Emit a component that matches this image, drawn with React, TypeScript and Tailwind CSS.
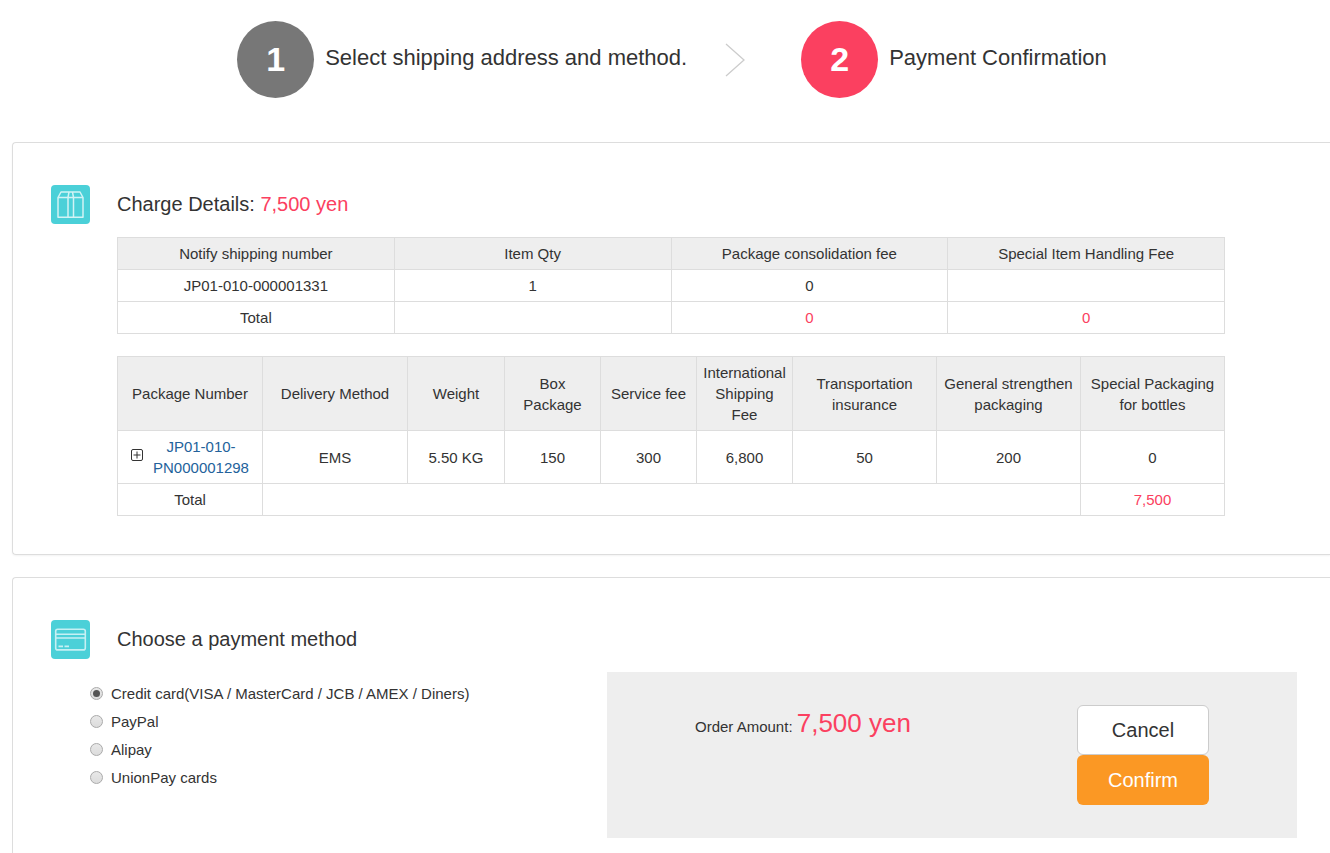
import { useState } from "react";
import type { ReactNode } from "react";

const FEE_HEADERS = [
    "Notify shipping number",
    "Item Qty",
    "Package consolidation fee",
    "Special Item Handling Fee",
];

const FEE_ROWS = [["JP01-010-000001331", "1", "0", ""]];

const PACKAGE_COLUMNS = [
    { title: "Package Number", width: "w-[145px]" },
    { title: "Delivery Method", width: "w-[145px]" },
    { title: "Weight", width: "w-[97px]" },
    { title: "Box Package", width: "w-24" },
    { title: "Service fee", width: "w-24" },
    { title: "International Shipping Fee", width: "w-24" },
    { title: "Transportation insurance", width: "w-36" },
    { title: "General strengthen packaging", width: "w-36" },
    { title: "Special Packaging for bottles", width: "w-36" },
];

const PACKAGE_VALUES = ["EMS", "5.50 KG", "150", "300", "6,800", "50", "200", "0"];

const PAYMENT_METHODS = [
    { id: "credit", label: "Credit card(VISA / MasterCard / JCB / AMEX / Diners)" },
    { id: "paypal", label: "PayPal" },
    { id: "alipay", label: "Alipay" },
    { id: "unionpay", label: "UnionPay cards" },
];

const CELL = "border border-[#ddd] px-1 py-[5px] text-center align-middle font-normal";

const BoxIcon = () => (
    <svg
        viewBox="0 0 39 39"
        className="h-[39px] w-[39px] shrink-0 rounded bg-[#4bd0d8]"
        fill="none"
        stroke="#d2f3f5"
        strokeWidth="1.5"
        strokeLinejoin="round"
        aria-hidden="true"
    >
        <path d="M7 12.5 10 7h19l3 5.5v19.7H7zM7 12.5h25" />
        <path d="M18 7l-1 5.500v19.700M21.500 7l1 5.500v19.700" />
    </svg>
);

const CardIcon = () => (
    <svg
        viewBox="0 0 39 39"
        className="h-[39px] w-[39px] shrink-0 rounded bg-[#4bd0d8]"
        fill="none"
        stroke="#c6f0f3"
        strokeWidth="1.6"
        aria-hidden="true"
    >
        <rect x="4.700" y="9.300" width="29.600" height="20.600" rx="2" />
        <path d="M5 14.300h29M5 18h29M7.500 26.400h4.500M13.500 26.400h4.500" />
    </svg>
);

const Step = ({ number, title, active }: { number: number; title: string; active?: boolean }) => (
    <li className="flex items-center gap-[11px]">
        <span
            className={`grid h-[77px] w-[77px] place-items-center rounded-full text-[34px] font-bold text-white ${
                active ? "bg-[#fb4060]" : "bg-[#777]"
            }`}
        >
            {number}
        </span>
        <span className="pb-1 text-[22px]">{title}</span>
    </li>
);

const SectionTitle = ({ icon, children }: { icon: ReactNode; children: ReactNode }) => (
    <div className="flex items-center gap-[27px]">
        {icon}
        <h2 className="pb-0.5 text-xl">{children}</h2>
    </div>
);

const FeeTable = () => (
    <table className="w-full table-fixed border-collapse">
        <thead className="bg-[#eee]">
            <tr>
                {FEE_HEADERS.map((title) => (
                    <th key={title} className={CELL}>
                        {title}
                    </th>
                ))}
            </tr>
        </thead>
        <tbody>
            {FEE_ROWS.map((row) => (
                <tr key={row[0]}>
                    {row.map((value, index) => (
                        <td key={index} className={CELL}>
                            {value}
                        </td>
                    ))}
                </tr>
            ))}
            <tr>
                <td className={CELL}>Total</td>
                <td className={CELL}></td>
                <td className={`${CELL} text-[#fb4060]`}>0</td>
                <td className={`${CELL} text-[#fb4060]`}>0</td>
            </tr>
        </tbody>
    </table>
);

const PackageTable = () => (
    <table className="w-full table-fixed border-collapse">
        <thead className="bg-[#eee]">
            <tr>
                {PACKAGE_COLUMNS.map(({ title, width }) => (
                    <th key={title} className={`${CELL} ${width}`}>
                        {title}
                    </th>
                ))}
            </tr>
        </thead>
        <tbody>
            <tr>
                <td className={CELL}>
                    <div className="flex items-center justify-center gap-2.5">
                        <button type="button" aria-label="Expand package" className="pb-1">
                            <svg viewBox="0 0 12 12" className="h-3 w-3" fill="none" stroke="#333">
                                <rect x="0.5" y="0.5" width="11" height="11" rx="1.5" />
                                <path d="M6 2.500v7M2.500 6h7" />
                            </svg>
                        </button>
                        <a href="#package" className="text-[#23629b]">
                            JP01-010-
                            <br />
                            PN000001298
                        </a>
                    </div>
                </td>
                {PACKAGE_VALUES.map((value, index) => (
                    <td key={index} className={CELL}>
                        {value}
                    </td>
                ))}
            </tr>
            <tr>
                <td className={CELL}>Total</td>
                <td className={CELL} colSpan={7}></td>
                <td className={`${CELL} text-[#fb4060]`}>7,500</td>
            </tr>
        </tbody>
    </table>
);

const App = () => {
    const [method, setMethod] = useState("credit");

    return (
        <main className="flex min-h-screen flex-col bg-white pl-3 font-['Liberation_Sans',Arial,sans-serif] text-[15px] leading-[21px] text-[#333]">
            <ol className="flex items-center justify-center pt-[21px] pb-11 pl-0.5">
                <Step number={1} title="Select shipping address and method." />
                <li aria-hidden="true" className="mr-14 ml-[38px]">
                    <svg
                        viewBox="0 0 20 34"
                        className="h-[34px] w-5"
                        fill="none"
                        stroke="#ccc"
                        strokeWidth="1.3"
                    >
                        <path d="M1 1l18 16L1 33" />
                    </svg>
                </li>
                <Step number={2} title="Payment Confirmation" active />
            </ol>

            <section className="rounded-l border border-r-0 border-[#ddd] pt-[42px] pb-[38px] pl-[38px] shadow-xs">
                <SectionTitle icon={<BoxIcon />}>
                    Charge Details: <span className="text-[#fb4060]">7,500 yen</span>
                </SectionTitle>
                <div className="mt-[13px] mr-[105px] ml-[66px] flex flex-col gap-[22px]">
                    <FeeTable />
                    <PackageTable />
                </div>
            </section>

            <section className="mt-[22px] grow rounded-tl border border-r-0 border-b-0 border-[#ddd] pt-[42px] pb-3 pl-[38px]">
                <SectionTitle icon={<CardIcon />}>Choose a payment method</SectionTitle>
                <div className="mt-[13px] mr-[33px] ml-[39px] flex justify-between">
                    <fieldset aria-label="Payment method" className="pt-[7px]">
                        {PAYMENT_METHODS.map(({ id, label }) => (
                            <label key={id} className="flex h-7 items-center gap-2">
                                <input
                                    type="radio"
                                    name="payment"
                                    value={id}
                                    checked={method === id}
                                    onChange={() => setMethod(id)}
                                    className="grid h-[13px] w-[13px] appearance-none place-items-center rounded-full border border-[#aaa] bg-linear-to-b from-[#e8e8e8] to-[#dcdcdc] before:h-[7px] before:w-[7px] before:rounded-full checked:before:bg-[#555]"
                                />
                                {label}
                            </label>
                        ))}
                    </fieldset>
                    <div className="flex w-[690px] justify-between bg-[#eee] px-[88px] py-[33px]">
                        <p className="leading-9">
                            Order Amount: <span className="text-[26px] text-[#fb4060]">7,500 yen</span>
                        </p>
                        <div className="flex w-[132px] flex-col text-xl">
                            <button type="button" className="h-[50px] rounded-md border border-[#ccc] bg-white">
                                Cancel
                            </button>
                            <button type="button" className="h-[50px] rounded-md bg-[#fb9824] text-white">
                                Confirm
                            </button>
                        </div>
                    </div>
                </div>
            </section>
        </main>
    );
};

export default App;
